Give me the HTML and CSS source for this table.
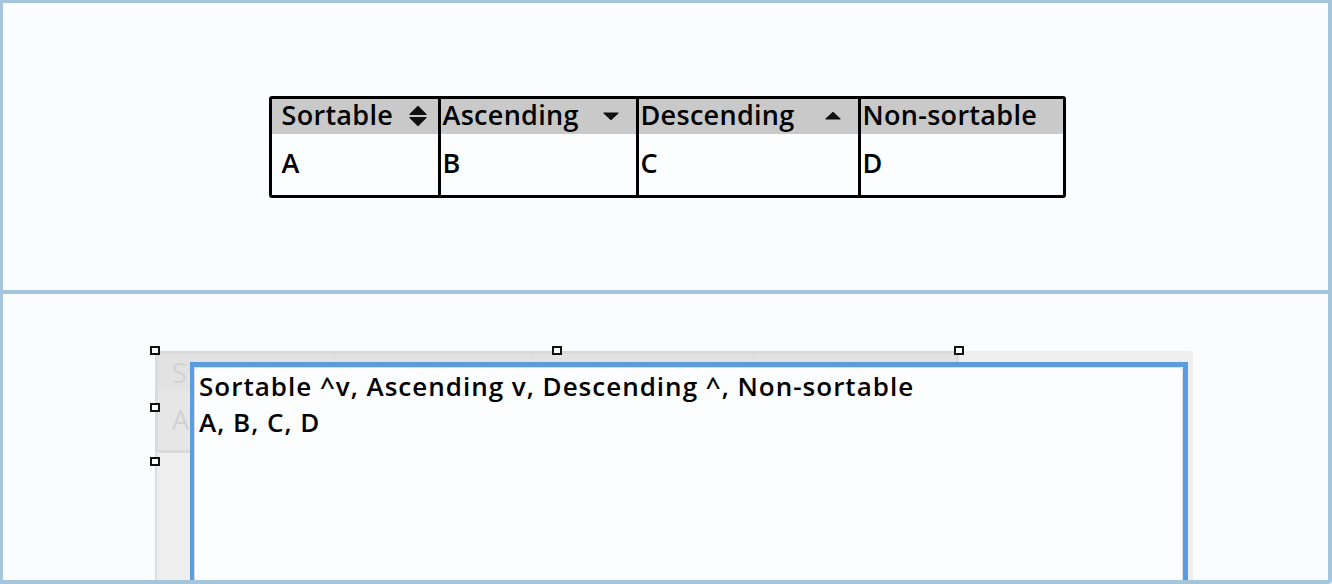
FILE: index.html
```html
<!DOCTYPE html>
<html lang="en">
<head>
<meta charset="utf-8">
<title>Data table</title>
<link rel="stylesheet" href="styles.css">
</head>
<body>
<div class="frame">
  <section class="panel panel-top">
    <div class="table">
      <div class="row head">
        <div class="cell first"><span>Sortable</span>
          <svg class="sort-icon" viewBox="0 0 20 22" aria-hidden="true"><path d="M10 1.5 L18 9.5 H2 Z M2 12.5 H18 L10 20.5 Z"/></svg>
        </div>
        <div class="cell"><span>Ascending</span>
          <svg class="caret" viewBox="0 0 16 8" aria-hidden="true"><path d="M1 1 H15 L8 7.5 Z"/></svg>
        </div>
        <div class="cell"><span>Descending</span>
          <svg class="caret" viewBox="0 0 16 8" aria-hidden="true"><path d="M1 7 H15 L8 0.5 Z"/></svg>
        </div>
        <div class="cell"><span>Non-sortable</span></div>
      </div>
      <div class="row body">
        <div class="cell first">A</div>
        <div class="cell">B</div>
        <div class="cell">C</div>
        <div class="cell">D</div>
      </div>
    </div>
  </section>
  <section class="panel panel-bottom">
    <div class="editor-wrap">
      <div class="editor-frame">
        <div class="ghost">
          <div class="grow ghead">
            <div class="gcell gfirst">S</div><div class="gcell"></div><div class="gcell"></div><div class="gcell"></div>
          </div>
          <div class="grow gbody">
            <div class="gcell gfirst">A</div><div class="gcell"></div><div class="gcell"></div><div class="gcell"></div>
          </div>
        </div>
        <div class="editor">
          <div class="editor-inner">
            <div class="line">Sortable ^v, Ascending v, Descending ^, Non-sortable</div>
            <div class="line">A, B, C, D</div>
          </div>
        </div>
      </div>
      <span class="handle h-tl"></span>
      <span class="handle h-tm"></span>
      <span class="handle h-tr"></span>
      <span class="handle h-ml"></span>
      <span class="handle h-bl"></span>
    </div>
  </section>
</div>
</body>
</html>
```

FILE: styles.css
```css
* { box-sizing: border-box; }
html, body { margin: 0; padding: 0; }
body {
  width: 1332px;
  height: 584px;
  overflow: hidden;
  background: #f9fbfd;
  font-family: "Open Sans", "Liberation Sans", sans-serif;
  color: #000;
}
.frame {
  width: 1332px;
  height: 584px;
  border: solid #a5c5da;
  border-width: 3px 4px 4px 3px;
  border-radius: 0 0 4px 0;
  display: flex;
  flex-direction: column;
  background: #fafcfe;
}
.panel-top {
  height: 291px;
  border-bottom: 4px solid #a5c5da;
  display: flex;
  align-items: center;
  justify-content: center;
}
.panel-bottom {
  flex: 1;
  overflow: hidden;
  padding: 57px 0 0 152px;
}

/* top table */
.table {
  width: 797px;
  border: 3px solid #000;
  border-radius: 3px;
  font-size: 27px;
  font-weight: 600;
  letter-spacing: 0.3px;
  margin-left: 3px;
}
.row {
  display: grid;
  grid-template-columns: 166px 198px 222px 205px;
}
.head { height: 35px; background: #c9c9c9; }
.body { height: 61px; background: #fcfdfe; }
.cell {
  border-left: 3px solid #000;
  padding: 0 0 4px 2px;
  display: flex;
  align-items: center;
  justify-content: space-between;
  line-height: 1;
  white-space: nowrap;
}
.cell.first { border-left: 0; padding-left: 10px; }
.sort-icon { width: 20px; height: 22px; margin: 4px 10px 0 0; }
.caret { width: 16px; height: 8px; margin: 4px 17px 0 0; }
.sort-icon path, .caret path { fill: #111; stroke: #111; stroke-width: 1.2; stroke-linejoin: round; }

/* bottom editor */
.editor-wrap {
  position: relative;
  width: 1038px;
}
.editor-frame {
  display: grid;
  width: 1038px;
  height: 250px;
  background: #eeeeee;
  border-left: 2px solid #dcdcdc;
  border-radius: 3px 3px 0 0;
}
.ghost, .editor { grid-area: 1 / 1; }
.ghost {
  width: 802px;
  height: 102px;
  border: 3px solid #d9d9d9;
  border-left-width: 1px;
  border-radius: 3px;
  background: #e6e6e6;
  color: #d2d2d2;
  font-size: 27px;
}
.grow {
  display: grid;
  grid-template-columns: 175px 198px 222px 1fr;
}
.ghead { height: 35px; background: #e2e2e2; }
.gbody { height: 61px; }
.gcell {
  border-left: 3px solid #dedede;
  display: flex;
  align-items: center;
  padding-left: 14px;
}
.gcell.gfirst { border-left: 0; }
.editor {
  margin: 11px 0 0 33px;
  width: 998px;
  height: 240px;
  border: solid #5b9be0;
  border-width: 5px 5px 0 4px;
  z-index: 1;
}
.editor-inner {
  height: 100%;
  background: #fcfdfe;
  border: 1px solid #dedede;
  border-bottom: 0;
  border-radius: 4px 4px 0 0;
  padding: 0 0 0 4px;
  font-size: 26px;
  font-weight: 600;
  letter-spacing: 1px;
  line-height: 36px;
}

.handle {
  position: absolute;
  width: 10px;
  height: 9px;
  border: 2px solid #111;
  background: #fff;
  z-index: 2;
}
.h-tl { left: -5px; top: -5px; }
.h-tm { left: 397px; top: -5px; }
.h-tr { left: 799px; top: -5px; }
.h-ml { left: -5px; top: 52px; }
.h-bl { left: -5px; top: 106px; }
```
